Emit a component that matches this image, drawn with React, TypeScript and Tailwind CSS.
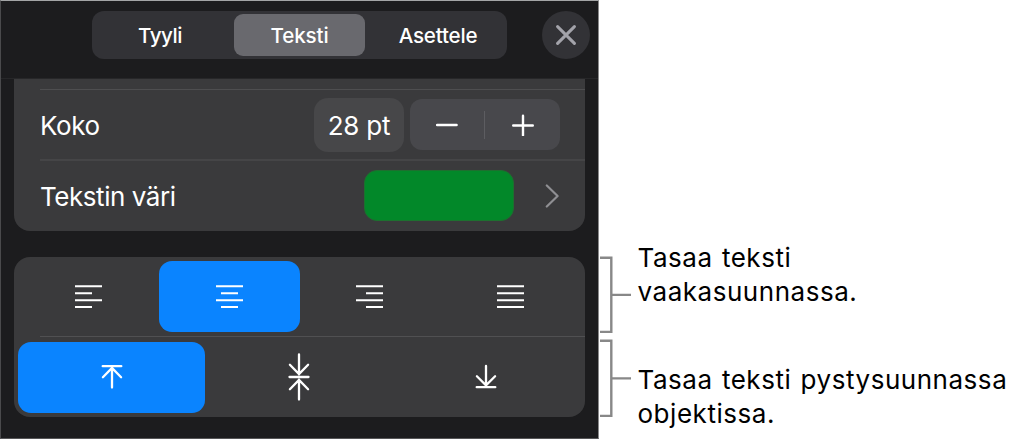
import React, { useState } from 'react';

type AlignKind = 'left' | 'center' | 'right' | 'justify';

const TABS = ['Tyyli', 'Teksti', 'Asettele'];
const H_ALIGN: AlignKind[] = ['left', 'center', 'right', 'justify'];
const V_ALIGN = ['top', 'middle', 'bottom'];

const AlignIcon = ({ kind }: { kind: AlignKind }) => {
  // the short lines are 17 wide, the long ones 27
  const start = { left: 0, center: 5, right: 10, justify: 0 }[kind];
  const len = kind === 'justify' ? 27 : 17;
  return (
    <svg width="27" height="24" viewBox="0 0 27 24" fill="none" stroke="white" strokeWidth="2.1" className="block">
      <path d={`M0 1.2h27M${start} 8.2h${len}M0 15.2h27M${start} 22h${len}`} />
    </svg>
  );
};

const VerticalIcon = ({ kind }: { kind: string }) => (
  <svg width="22" height="50" viewBox="0 0 22 50" fill="none" stroke="white" strokeWidth="2.3" strokeLinecap="round" className="block">
    {kind === 'top' && <path d="M1.7 14.2h18.6M11 15.5v20M1.9 25.2l9.1-9.2 9.1 9.2" />}
    {kind === 'middle' && <path d="M1.5 25h19M11 2.4v20M1.9 12.7l9.1 9.3 9.1-9.3M11 47.6v-20M1.9 37.3l9.1-9.3 9.1 9.3" />}
    {kind === 'bottom' && <path d="M1.7 35.2h18.6M11 14v20M1.9 24.2l9.1 9.2 9.1-9.2" />}
  </svg>
);

const Bracket = ({ height }: { height: number }) => (
  <svg width="32" height={height} fill="none" stroke="#888888" strokeWidth="2.4" className="block shrink-0">
    <path d={`M0 1.7h11.3V${height - 1.1}H0M11.3 ${height / 2 + 0.4}H31`} />
  </svg>
);

export default function App() {
  const [tab, setTab] = useState('Teksti');
  const [size, setSize] = useState(28);
  const [horizontal, setHorizontal] = useState<AlignKind>('center');
  const [vertical, setVertical] = useState('top');

  return (
    <div className="flex h-[439px] w-[1016px] overflow-hidden bg-white font-['Inter',sans-serif]">
      <div className="flex w-[599px] shrink-0 flex-col border border-t-[#a3a5a6] border-r-[#8a8a8b] border-b-[#565658] border-l-[#4a4a4c] bg-[#1c1c1e] text-white">
        <div className="flex h-[78px] shrink-0 border-b border-[#272729] pt-[10px] pl-[91px]">
          <div className="flex h-12 w-[415px] rounded-xl bg-[#323236] py-[3px] pl-[3px]">
            {TABS.map((name) => (
              <button
                key={name}
                onClick={() => setTab(name)}
                className={`h-[42px] rounded-[9px] pt-[2px] text-[20.6px] font-medium ${name === 'Tyyli' ? 'w-[139px] pr-[9px] tracking-[-0.5px]' : name === 'Teksti' ? 'w-[131px] tracking-[-0.1px]' : 'w-[139px] pl-[7px] tracking-[-0.2px]'} ${tab === name ? 'bg-[#69696e]' : ''}`}
              >
                {name}
              </button>
            ))}
          </div>
          <button className="ml-[35px] flex h-12 w-12 items-center justify-center rounded-full bg-[#323236]">
            <svg width="20" height="20" viewBox="0 0 20 20" fill="none" stroke="#a3a3aa" strokeWidth="3" strokeLinecap="round">
              <path d="M1.6 1.6l16.8 16.8M18.4 1.6L1.6 18.4" />
            </svg>
          </button>
        </div>

        <div className="ml-[13px] h-[152px] w-[571px] shrink-0 rounded-b-[16px] bg-[#3a3a3c] pt-[10px] pl-[26px]">
          <div className="flex h-[70px] items-center border-t border-[#4e4e50]">
            <span className="grow pt-[2px] text-[26px] tracking-[-0.4px]">Koko</span>
            <div className="flex h-[54px] w-[90px] items-center justify-center rounded-[14px] bg-[#474749] pt-[2px] text-[26px] tracking-[-0.2px]">{size} pt</div>
            <div className="mr-[25px] ml-[6px] flex h-[51px] w-[150px] items-center rounded-xl bg-[#48484c]">
              <button onClick={() => setSize(size - 1)} className="flex h-full w-[74px] items-center justify-center">
                <svg width="22" height="22" viewBox="0 0 22 22" stroke="white" strokeWidth="2.4" strokeLinecap="round"><path d="M1 11h19.6" /></svg>
              </button>
              <div className="h-7 w-px bg-[#5d5d61]" />
              <button onClick={() => setSize(size + 1)} className="flex h-full w-[75px] items-center justify-center">
                <svg width="22" height="22" viewBox="0 0 22 22" stroke="white" strokeWidth="2.4" strokeLinecap="round"><path d="M1.2 11.5h19.6M11 1.7v19.6" /></svg>
              </button>
            </div>
          </div>
          <div className="flex h-[72px] items-center border-t-2 border-[#454547] pb-px">
            <span className="grow pt-px text-[26px] tracking-[-0.45px]">Tekstin väri</span>
            <div className="h-[51px] w-[150px] rounded-[13px] border border-[#1d702f] bg-[#028829]" />
            <svg width="14" height="24" viewBox="0 0 14 24" fill="none" stroke="#8f8f93" strokeWidth="2.2" strokeLinecap="round" strokeLinejoin="round" className="mr-[26px] ml-[31px]">
              <path d="M1.8 1.5L12.6 12 1.8 22.5" />
            </svg>
          </div>
        </div>

        <div className="mt-[26px] ml-[13px] flex h-[160px] w-[571px] shrink-0 flex-col rounded-[16px] bg-[#3a3a3c]">
          <div className="flex h-[79px] items-center pr-[4.5px] pl-[4.5px]">
            {H_ALIGN.map((kind) => (
              <button
                key={kind}
                onClick={() => setHorizontal(kind)}
                className={`flex h-[71px] flex-1 items-center justify-center rounded-[13px] ${horizontal === kind ? 'bg-[#0a84ff]' : ''}`}
              >
                <AlignIcon kind={kind} />
              </button>
            ))}
          </div>
          <div className="ml-[26px] h-px bg-[#505052]" />
          <div className="flex h-[80px] items-center pr-[5px] pl-[4px]">
            {V_ALIGN.map((kind) => (
              <button
                key={kind}
                onClick={() => setVertical(kind)}
                className={`flex h-[71px] flex-1 items-center justify-center rounded-[13px] ${vertical === kind ? 'bg-[#0a84ff]' : ''}`}
              >
                <VerticalIcon kind={kind} />
              </button>
            ))}
          </div>
        </div>
      </div>

      <div className="ml-px flex flex-col pt-[256px] text-[26px] leading-[34.7px] tracking-[0.53px] whitespace-nowrap text-black [word-spacing:1.5px]">
        <div className="flex h-[83px] items-start">
          <Bracket height={77} />
          <p className="-mt-[15.5px] ml-[5.5px]">Tasaa teksti<br />vaakasuunnassa.</p>
        </div>
        <div className="flex items-start">
          <Bracket height={78} />
          <p className="mt-[23.5px] ml-[5.5px]">Tasaa teksti pystysuunnassa<br />objektissa.</p>
        </div>
      </div>
    </div>
  );
}
